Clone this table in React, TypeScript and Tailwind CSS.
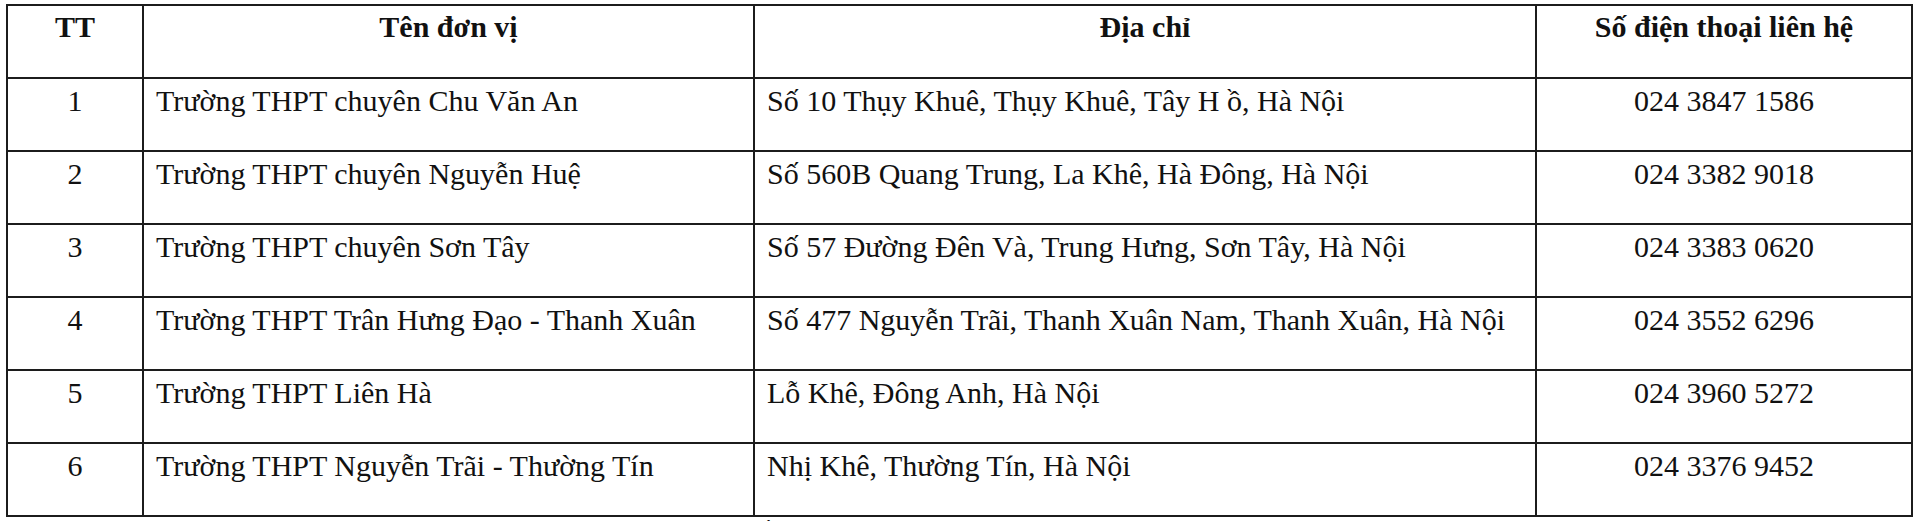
import React from 'react';

interface School {
    tt: number;
    name: string;
    address: string;
    phone: string;
}

const schools: School[] = [
    { tt: 1, name: 'Trường THPT chuyên Chu Văn An', address: 'Số 10 Thụy Khuê, Thụy Khuê, Tây H ồ, Hà Nội', phone: '024 3847 1586' },
    { tt: 2, name: 'Trường THPT chuyên Nguyễn Huệ', address: 'Số 560B Quang Trung, La Khê, Hà Đông, Hà Nội', phone: '024 3382 9018' },
    { tt: 3, name: 'Trường THPT chuyên Sơn Tây', address: 'Số 57 Đường Đên Và, Trung Hưng, Sơn Tây, Hà Nội', phone: '024 3383 0620' },
    { tt: 4, name: 'Trường THPT Trân Hưng Đạo - Thanh Xuân', address: 'Số 477 Nguyễn Trãi, Thanh Xuân Nam, Thanh Xuân, Hà Nội', phone: '024 3552 6296' },
    { tt: 5, name: 'Trường THPT Liên Hà', address: 'Lỗ Khê, Đông Anh, Hà Nội', phone: '024 3960 5272' },
    { tt: 6, name: 'Trường THPT Nguyễn Trãi - Thường Tín', address: 'Nhị Khê, Thường Tín, Hà Nội', phone: '024 3376 9452' },
];

const cell = 'border-2 border-[#1c1c1c] align-top h-[73px] p-0';

export default function App() {
    return (
        <div className="bg-white w-[1920px] h-[521px] overflow-hidden text-[#111] font-['Liberation_Serif',serif]">
            <table className="border-collapse table-fixed w-[1906px] ml-[6px] mt-[4px] text-[30px] leading-[33px]">
                <colgroup>
                    <col className="w-[136px]" />
                    <col className="w-[611px]" />
                    <col className="w-[782px]" />
                    <col className="w-[376px]" />
                </colgroup>
                <thead>
                    <tr>
                        <th className={`${cell} pt-[4px] font-bold text-center`}>TT</th>
                        <th className={`${cell} pt-[4px] font-bold text-center`}>Tên đơn vị</th>
                        <th className={`${cell} pt-[4px] font-bold text-center`}>Địa chỉ</th>
                        <th className={`${cell} pt-[4px] font-bold text-center`}>Số điện thoại liên hệ</th>
                    </tr>
                </thead>
                <tbody>
                    {schools.map((s) => (
                        <tr key={s.tt}>
                            <td className={`${cell} pt-[5px] text-center`}>{s.tt}</td>
                            <td className={`${cell} pt-[5px] pl-[12px] whitespace-nowrap`}>{s.name}</td>
                            <td className={`${cell} pt-[5px] pl-[12px] whitespace-nowrap`}>{s.address}</td>
                            <td className={`${cell} pt-[5px] text-center`}>{s.phone}</td>
                        </tr>
                    ))}
                </tbody>
            </table>
            {/* stray accent mark peeking below the table */}
            <div className="pl-[766px] mt-[1px] text-[20px] leading-[20px]">ˋ</div>
        </div>
    );
}
